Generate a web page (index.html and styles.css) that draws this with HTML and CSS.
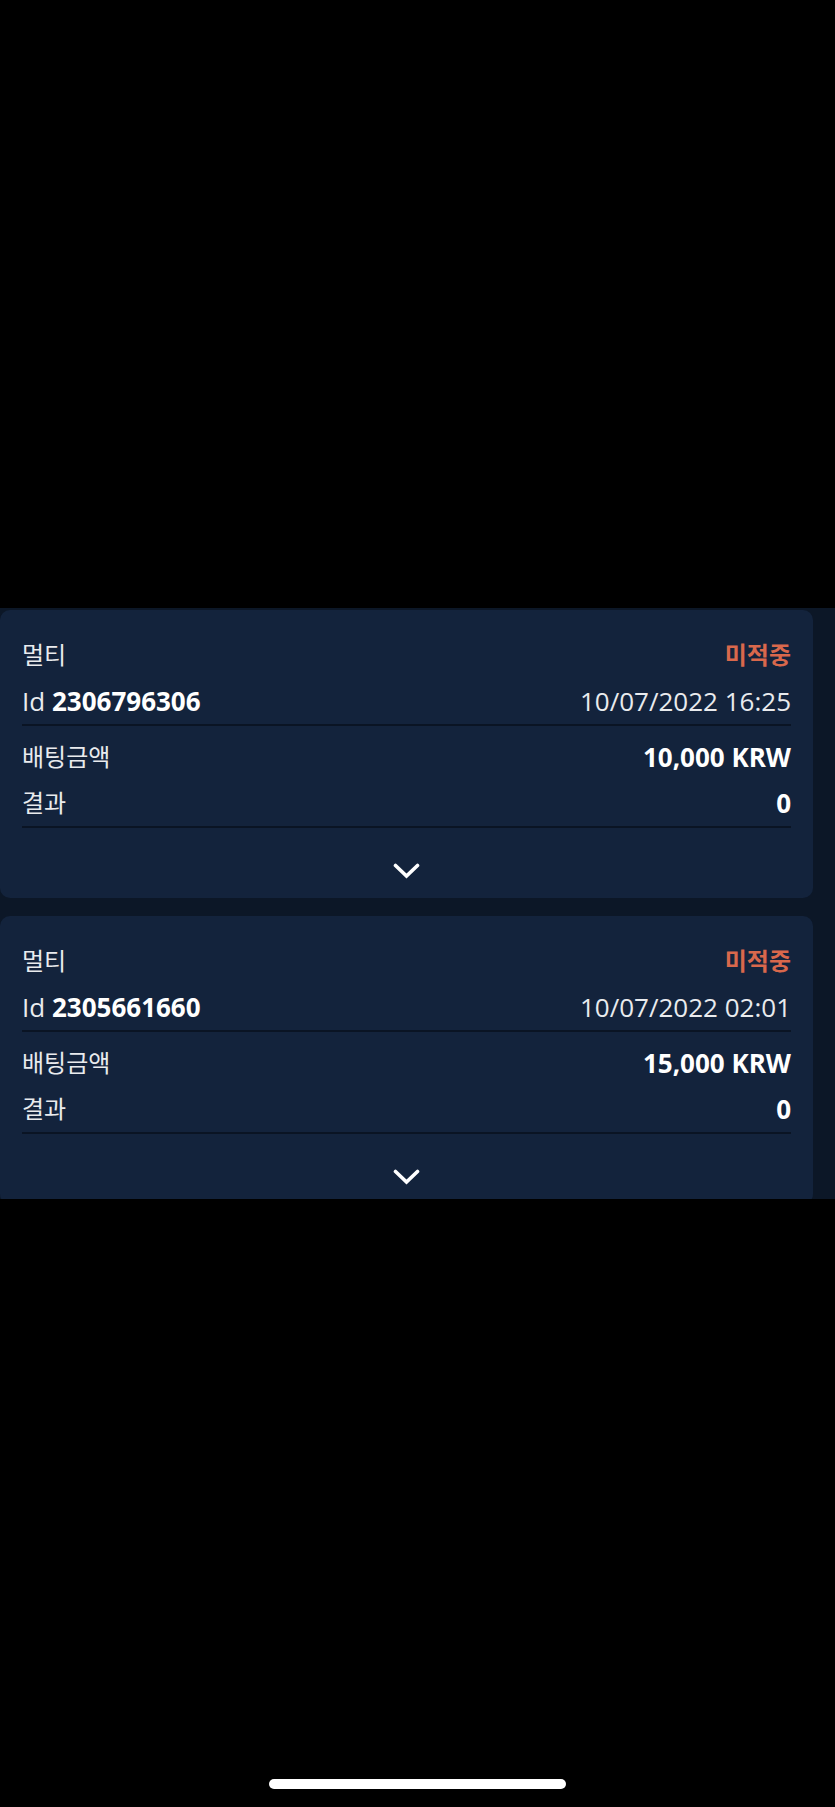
FILE: index.html
```html
<!DOCTYPE html>
<html lang="ko">
<head>
<meta charset="utf-8">
<title>베팅 내역</title>
<link rel="stylesheet" href="styles.css">
</head>
<body>
<div class="screen">
  <div class="top-space"></div>
  <section class="bet-list">
    <article class="bet-card">
      <div class="group">
        <div class="row">
          <span class="ko">멀티</span>
          <span class="ko status">미적중</span>
        </div>
        <div class="row">
          <span>Id <b>2306796306</b></span>
          <span>10/07/2022 16:25</span>
        </div>
      </div>
      <div class="group second">
        <div class="row">
          <span class="ko">배팅금액</span>
          <b>10,000 KRW</b>
        </div>
        <div class="row">
          <span class="ko">결과</span>
          <b>0</b>
        </div>
      </div>
      <div class="toggle">
        <svg class="chevron" width="27" height="16" viewBox="0 0 27 16"><path d="M2.5 2.5 L13.5 13 L24.5 2.5" fill="none" stroke="#fff" stroke-width="3.6" stroke-linecap="round" stroke-linejoin="miter"/></svg>
      </div>
    </article>
    <article class="bet-card">
      <div class="group">
        <div class="row">
          <span class="ko">멀티</span>
          <span class="ko status">미적중</span>
        </div>
        <div class="row">
          <span>Id <b>2305661660</b></span>
          <span>10/07/2022 02:01</span>
        </div>
      </div>
      <div class="group second">
        <div class="row">
          <span class="ko">배팅금액</span>
          <b>15,000 KRW</b>
        </div>
        <div class="row">
          <span class="ko">결과</span>
          <b>0</b>
        </div>
      </div>
      <div class="toggle">
        <svg class="chevron" width="27" height="16" viewBox="0 0 27 16"><path d="M2.5 2.5 L13.5 13 L24.5 2.5" fill="none" stroke="#fff" stroke-width="3.6" stroke-linecap="round" stroke-linejoin="miter"/></svg>
      </div>
    </article>
  </section>
  <div class="bottom-area">
    <div class="home-indicator"></div>
  </div>
</div>
</body>
</html>
```

FILE: styles.css
```css
html, body {
  margin: 0;
  padding: 0;
  background: #000;
}

.screen {
  width: 835px;
  height: 1807px;
  display: grid;
  grid-template-rows: 608px 591px 1fr;
  font-family: "Open Sans", "Noto Sans CJK KR", sans-serif;
  font-size: 26px;
  color: #e9ebee;
}

.bet-list {
  background: #0c1727;
  overflow: hidden;
  padding: 2px 22px 0 0;
  display: flex;
  flex-direction: column;
  gap: 18px;
}

.bet-card {
  flex: none;
  background: #13233c;
  border-radius: 10px;
  padding: 22px 22px 0 22px;
}

.group {
  border-bottom: 2px solid #0a1424;
}

.group.second {
  padding-top: 8px;
}

.row {
  display: flex;
  justify-content: space-between;
  align-items: center;
  height: 46px;
  line-height: 46px;
  white-space: nowrap;
}

.ko {
  font-size: 24px;
}

.status {
  color: #d9684c;
  font-weight: 700;
}

b {
  font-weight: 700;
  color: #fff;
}

.toggle {
  display: flex;
  justify-content: center;
  padding: 35px 0 19px;
}

.chevron {
  display: block;
}

.bottom-area {
  display: flex;
  align-items: flex-end;
  justify-content: center;
  padding-bottom: 18px;
}

.home-indicator {
  width: 297px;
  height: 10px;
  border-radius: 5px;
  background: #fff;
}
```
